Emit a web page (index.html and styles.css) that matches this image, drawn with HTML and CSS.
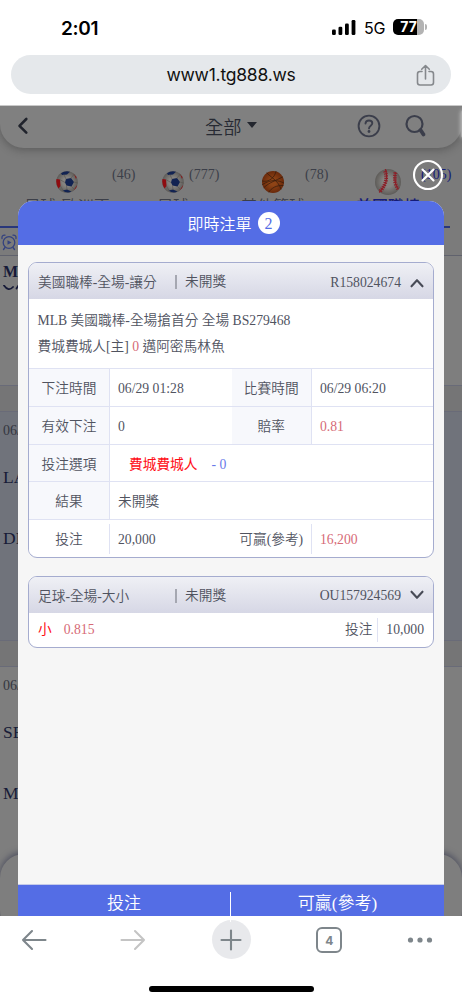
FILE: index.html
```html
<!DOCTYPE html>
<html lang="zh-Hant">
<head>
<meta charset="utf-8">
<meta name="viewport" content="width=device-width, initial-scale=1">
<title>即時注單</title>
<link rel="stylesheet" href="styles.css">
</head>
<body>
<div class="phone">
  <div class="status">
    <span class="clock">2:01</span>
    <span class="status-right">
      <svg class="signal" width="24" height="15" viewBox="0 0 24 15"><rect x="0" y="9.5" width="3.8" height="5.5" rx="1.3"/><rect x="6.5" y="6.7" width="3.8" height="8.3" rx="1.3"/><rect x="13" y="3.6" width="3.8" height="11.4" rx="1.3"/><rect x="19.6" y="0" width="3.8" height="15" rx="1.3"/></svg>
      <span class="net">5G</span>
      <span class="battery">77</span><i class="battery-tip"></i>
    </span>
  </div>
  <div class="address">
    <div class="address-pill">
      <span>www1.tg888.ws</span>
      <svg class="share" width="20" height="24" viewBox="0 0 20 24"><path d="M6 7.5H4Q1.5 7.5 1.5 10V18.5Q1.5 21 4 21H15Q17.500 21 17.500 18.500V10Q17.500 7.500 15 7.500H13M9.500 15V1.800M5.700 5.300L9.500 1.500L13.300 5.300"/></svg>
    </div>
  </div>

  <div class="web">
    <div class="page">
      <header class="topbar">
        <svg class="back" width="12" height="18" viewBox="0 0 12 18"><path d="M9.300 2L2.500 8.800L9.300 15.600"/></svg>
        <div class="topbar-title">全部<i class="caret"></i></div>
        <svg class="help" width="24" height="24" viewBox="0 0 24 24"><circle cx="12" cy="12" r="10.400"/><path d="M8.500 9.500Q8.700 6.500 12 6.500Q15.300 6.500 15.300 9.300C15.300 11.700 12 11.700 12 14.400"/><circle class="fill" cx="12" cy="17.500" r="1.400"/></svg>
        <svg class="search" width="22" height="24" viewBox="0 0 22 24"><circle cx="9.500" cy="10" r="8"/><path class="handle" d="M15.500 16L18.500 20.500"/></svg>
      </header>
      <nav class="tabs">
        <div class="tab">
          <svg width="22" height="22" viewBox="0 0 22 22"><use href="#soccer"/></svg>
          <span class="count c1">(46)</span><b>足球-歐洲盃</b>
        </div>
        <div class="tab">
          <svg width="22" height="22" viewBox="0 0 22 22"><use href="#soccer"/></svg>
          <span class="count c2">(777)</span><b>足球</b>
        </div>
        <div class="tab">
          <svg width="22" height="22" viewBox="0 0 22 22">
            <defs><radialGradient id="orange"><stop offset=".3" stop-color="#8f4416"/><stop offset="1" stop-color="#69290b"/></radialGradient></defs>
            <circle cx="11" cy="11" r="11" fill="url(#orange)"/><path d="M0 10C7 12 13 6 14 0.500M0.500 13.500C9 8 16 9 21.800 12M2 16.500C8 11 13 10 20.500 6M5 2C8 6 16 9 19 18M7 21C9 17 15 14 21 14.500" fill="none" stroke="#3a1d0d" stroke-width=".8"/>
          </svg>
          <span class="count c3">(78)</span><b>其他籃球</b>
        </div>
        <div class="tab active">
          <svg class="ball-lg" width="26" height="26" viewBox="0 0 26 26"><circle cx="13" cy="13" r="13" fill="url(#white)"/><g fill="none" stroke="#8c2029"><path d="M10.500 .500Q14.500 13 4.500 23M20.500 3.500Q18.500 13 23 20" stroke-width="1.200"/><path d="M10 2Q14 13 4.500 23M20.500 3.500Q18.500 13 23 20" stroke-width="3.800" stroke-linecap="butt" stroke-dasharray="1.200 1.100"/></g></svg>
          <span class="count c4">(105)</span><b>美國職棒</b>
        </div>
      </nav>
      <svg class="symbols" width="0" height="0"><defs>
        <radialGradient id="white"><stop offset=".4" stop-color="#858380"/><stop offset="1" stop-color="#5e5c59"/></radialGradient>
        <g id="soccer"><circle cx="11" cy="11" r="10.800" fill="url(#white)"/><path d="M10 8L15 7L18 11L15.500 15.500L10.500 14.500L9 11.500Z" fill="#122352"/><path d="M5 2.200Q9 -.500 14 .700L11 3.500L6 4Z" fill="#122352"/><path d="M6.500 19.500L11 18.500L15.500 20.500Q11 22.800 6.500 19.500Z" fill="#122352"/><path d="M.500 8L4 8.500L4.500 15L2.500 17.500Q-.500 13 .500 8Z" fill="#8f0c10"/><path d="M17 2.500L20.500 6L20 8Q19.500 5 17 2.500ZM20.500 15L21.300 14Q20.500 18 17.500 19.500Z" fill="#8f0c10"/><path d="M4.500 9L9 11.500M4.500 15L7 19.500M10.500 14.500L11 18.500M10 8L8 3.800M15 7L18 3.500M18 11L21.500 12M15.500 15.500L18 18" fill="none" stroke="#56534f" stroke-width=".6"/></g>
      </defs></svg>
      <div class="games">
        <div class="toolbar-row"><svg width="16" height="17" viewBox="0 0 16 17"><circle cx="8" cy="8.500" r="5.800"/><path d="M1 4.500Q.500 1 4 1.200M15 4.500Q15.500 1 12 1.200M4 13.500L2.500 15.500M12 13.500L13.500 15.500"/><path class="fill" d="M6.500 6.200V10.800L10.500 8.500Z"/></svg></div>
        <div class="league">MLB<svg width="16" height="6" viewBox="0 0 16 6"><path d="M1 .500Q5.500 7 10 2M13.500 3.500L15.500 .500"/></svg></div>
        <div class="band"></div>
        <div class="game tint"><time>06/29</time><p>LAD</p><p>DET</p></div>
        <div class="band"></div>
        <div class="game"><time>06/29</time><p>SEA</p><p>MIN</p></div>
      </div>
      <div class="bottom-nav"></div>
      <div class="side-glow"></div>
    </div>

    <section class="modal">
      <svg class="close" width="32" height="32" viewBox="0 0 32 32"><circle cx="16" cy="16" r="14"/><path d="M10.500 10.500L21.500 21.500M21.500 10.500L10.500 21.500"/></svg>
      <h1>即時注單<span class="badge">2</span></h1>
      <div class="modal-body">
        <article class="card">
          <div class="card-head">
            <span class="kind">美國職棒-全場-讓分</span><span class="state">未開獎</span>
            <span class="ref">R158024674</span>
            <svg width="14" height="10" viewBox="0 0 14 10"><path d="M1.500 8.300L7 2.200L12.500 8.300"/></svg>
          </div>
          <div class="desc"><p>MLB 美國職棒-全場搶首分 全場 BS279468</p><p>費城費城人[主] <em>0</em> 邁阿密馬林魚</p></div>
          <div class="row"><div class="label">下注時間</div><div class="val">06/29 01:28</div><div class="label">比賽時間</div><div class="val">06/29 06:20</div></div>
          <div class="row"><div class="label">有效下注</div><div class="val">0</div><div class="label">賠率</div><div class="val"><em>0.81</em></div></div>
          <div class="row wide"><div class="label">投注選項</div><div class="val pick"><strong>費城費城人</strong><span>- 0</span></div></div>
          <div class="row wide"><div class="label">結果</div><div class="val">未開獎</div></div>
          <div class="row total"><div class="label">投注</div><div class="val">20,000</div><div class="label">可贏(參考)</div><div class="val"><em>16,200</em></div></div>
        </article>
        <article class="card">
          <div class="card-head">
            <span class="kind">足球-全場-大小</span><span class="state">未開獎</span>
            <span class="ref">OU157924569</span>
            <svg width="14" height="10" viewBox="0 0 14 10"><path d="M1.500 1.700L7 7.800L12.500 1.700"/></svg>
          </div>
          <div class="summary"><strong>小</strong><em>0.815</em><span class="stake">投注</span><span class="amount">10,000</span></div>
        </article>
      </div>
      <footer><span>投注</span><span>可贏(參考)</span></footer>
    </section>
  </div>

  <div class="browser-bar">
    <div class="buttons">
      <svg width="26" height="22" viewBox="0 0 26 22"><path d="M24.500 11H2M11 2L2 11L11 20"/></svg>
      <svg class="off" width="26" height="22" viewBox="0 0 26 22"><path d="M1.500 11H24M15 2L24 11L15 20"/></svg>
      <span class="plus"><svg width="22" height="22" viewBox="0 0 22 22"><path d="M11 1.500V20.500M1.500 11H20.500"/></svg></span>
      <span class="tabs-count">4</span>
      <svg class="dots" width="26" height="8" viewBox="0 0 26 8"><circle cx="3.500" cy="4" r="2.600"/><circle cx="13" cy="4" r="2.600"/><circle cx="22.500" cy="4" r="2.600"/></svg>
    </div>
    <div class="home"></div>
  </div>
</div>
</body>
</html>
```

FILE: styles.css
```css
* { box-sizing: border-box; }
body { margin: 0; background: #fff; font-family: "Liberation Serif", "Noto Sans CJK TC", serif; font-weight: 350; color: #50535f; }
p, h1 { margin: 0; font-weight: 350; }
em { font-style: normal; color: #d66a76; }
svg { display: block; flex: none; fill: none; stroke-linecap: round; stroke-linejoin: round; }
svg .fill { stroke: none; }
.phone { width: 462px; height: 1000px; display: flex; flex-direction: column; overflow: hidden; }

.status { height: 55px; padding: 0 35px 0 61px; display: flex; align-items: center; justify-content: space-between; font-family: Inter, sans-serif; font-weight: 400; color: #000; }
.clock { font-size: 19px; font-weight: 600; letter-spacing: -0.3px; padding-top: 1px; }
.status-right { display: flex; align-items: center; margin-top: -1px; }
.signal { fill: #000; }
.net { font-size: 16px; margin: 2px 8px 0 8px; letter-spacing: -0.2px; width: 21px; }
.battery { width: 31px; height: 16px; border-radius: 5px; background: linear-gradient(90deg, #000 77%, #b3b3b3 77%); color: #fff; font-size: 14px; line-height: 16px; font-weight: 700; text-align: center; }
.battery-tip { width: 2px; height: 6px; background: #b3b3b3; border-radius: 0 2px 2px 0; margin-left: 1px; }
.address { height: 50px; padding: 0 11px; }
.address-pill { height: 39px; border-radius: 20px; background: #e5e8eb; display: grid; grid-template-columns: 1fr auto 1fr; align-items: center; padding: 0 15px; font: 17.5px Inter, sans-serif; color: #111; letter-spacing: -0.22px; }
.address-pill span { grid-column: 2; margin-top: -1px; }
.share { justify-self: end; stroke: #85888c; stroke-width: 1.6; margin-top: 3px; }

.web { position: relative; height: 811px; border-top: 1px solid #c9c9c9; }
.page { height: 810px; background: #7b7b7b; overflow: hidden; position: relative; }
.topbar { height: 42px; padding: 0 35px 2px 17px; background: #808080; border-radius: 0 0 24px 24px; box-shadow: 0 2px 8px rgba(40,40,40,.38); display: grid; grid-template-columns: 12px 1fr 24px 22px; align-items: center; stroke: #3b3e4b; }
.back { stroke: #20232c; stroke-width: 2.6; }
.topbar-title { font-size: 18.3px; color: #272a33; display: flex; align-items: center; padding-left: 176px; }
.caret { border: 5.5px solid transparent; border-top: 6px solid #23262e; border-bottom: 0; margin-left: 5px; margin-top: -2px; }
.help { stroke: #3b3e4b; stroke-width: 1.9; margin-left: -24px; }
.search { stroke: #3b3e4b; stroke-width: 2.2; }
.help .fill { fill: #3b3e4b; }
.handle { stroke-width: 3.8; }
.tabs { height: 80px; width: 450px; display: grid; grid-template-columns: 134px 78px 122px 108px; border-bottom: 2px solid #29377b; padding-top: 23px; }
.tab { position: relative; display: flex; flex-direction: column; align-items: center; color: #3c3f49; }
.tab b { font-size: 16px; font-weight: 350; line-height: 20px; margin-top: 4px; }
.tab .ball-lg { margin: -2px 0; }
.tab.active { color: #151b78; }
.tab.active b { font-weight: 500; }
.count { position: absolute; top: -4px; font-size: 14px; line-height: 16px; }
.c1 { left: 112px; }
.c2 { left: 55px; }
.c3 { left: 93px; }
.c4 { left: 87px; }
.symbols { position: absolute; }
.toolbar-row { height: 28px; padding: 6px 1px; border-bottom: 1px solid #60626d; }
.toolbar-row svg { stroke: #34427f; stroke-width: 1.3; }
.toolbar-row .fill { fill: #34427f; }
.league { height: 129px; padding: 7px 3px 0; color: #161a38; font-weight: 700; font-size: 16px; line-height: 18px; background: #7e7e7e; }
.league svg { stroke: #161a38; stroke-width: 1.8; margin-top: 4px; }
.band { height: 27px; border: solid #696b78; border-width: 1px 0; background: #757576; }
.game { height: 228px; padding: 10px 3px 0; background: #7e7e7e; }
.game.tint { background: #70737b; }
.game time { font-size: 14px; line-height: 18px; color: #343640; display: block; margin-bottom: 27px; }
.game p { font-size: 17.500px; line-height: 20px; color: #171b37; margin-bottom: 41px; }
.bottom-nav { position: absolute; left: 0; right: 0; top: 748px; height: 80px; border-radius: 24px; background: #7e7e7e; box-shadow: 0 -2px 6px rgba(45,48,75,.6); }
.side-glow { position: absolute; right: -5px; top: 4px; width: 6px; height: 28px; border-radius: 5px; background: #aaa; box-shadow: 0 0 4px #ccc; }

.modal { position: absolute; left: 18px; top: 95px; width: 426px; height: 715px; display: flex; flex-direction: column; border-radius: 15px 15px 0 0; background: #f6f6f6; }
.close { position: absolute; right: 0; top: -42px; stroke: #fff; stroke-width: 2.1; }
.modal h1 { height: 44px; border-radius: 15px 15px 0 0; background: #546de5; color: #fff; font-size: 16px; display: flex; align-items: center; justify-content: center; gap: 6px; padding-left: 5px; }
.badge { width: 22px; height: 22px; border-radius: 50%; background: #fff; color: #546de5; text-align: center; line-height: 23px; }
.modal-body { flex: 1; padding: 17px 10px 0; display: flex; flex-direction: column; gap: 18px; }
.card { border: 1px solid #a5accf; border-radius: 9px; background: #fff; overflow: hidden; font-size: 13.700px; line-height: 20px; }
.card:first-child { height: 296px; }
.card:last-child { height: 72px; }
.card-head { height: 36px; background: linear-gradient(#eff0f5, #d6d7e5); display: grid; grid-template-columns: 138px 1fr auto 14px; align-items: center; padding: 0 9px; }
.card-head svg { stroke: #484b57; stroke-width: 2.1; margin: 3px 0 0; }
.card:last-child .card-head svg { margin-top: 0; }
.kind { padding-top: 4px; }
.state { border-left: 2px solid #a5a7b1; padding-left: 8px; line-height: 14px; margin: 2px 0 0 -1px; }
.ref { margin: 3px 9px 0 0; }
.card:last-child .ref { margin-top: 2px; }
.desc { height: 69px; padding: 9px 9px 0 8.5px; line-height: 26px; }
.row { height: 37.800px; display: grid; grid-template-columns: 81px 121.500px 80.500px 1fr; grid-template-rows: 100%; border-top: 1px solid #dfe2f3; line-height: 35px; }
.row.wide { grid-template-columns: 81px 1fr; }
.label { background: #f7f8fc; border-right: 1px solid #dfe2f3; text-align: center; padding-top: 2px; }
.label:nth-child(3) { white-space: nowrap; }
.val { padding: 2px 0 0 8px; }
.pick { padding-left: 19px; display: flex; gap: 14px; }
.pick strong, .summary strong { color: #ff0d16; font-weight: 400; }
.pick span { color: #6979e9; }
.total .label { background: #fff; line-height: 30px; margin: 4px 0 3px; padding-top: 1px; }
.summary { height: 34px; display: flex; align-items: center; padding: 0 9px; }
.summary em { margin-left: 12px; }
.stake { margin-left: auto; padding-right: 5px; border-right: 1px solid #dfe2f3; line-height: 24px; }
.amount { padding-left: 8px; }
.modal footer { height: 32px; background: #546de5; border-top: 1px solid #c5cbe9; color: #fff; font-size: 17px; display: grid; grid-template-columns: 212px 1fr; text-align: center; line-height: 37px; }
.modal footer span + span { border-left: 1px solid #fff; margin-top: 7px; line-height: 23px; }

.browser-bar { height: 84px; display: flex; flex-direction: column; align-items: center; background: #fff; }
.buttons { height: 47px; width: 462px; padding: 0 29px 0 21px; display: grid; grid-template-columns: 98px 91px 103px 91px 26px; justify-content: space-between; align-items: center; stroke: #7e868b; stroke-width: 2.1; }
.buttons .off { stroke: #c4c4c4; }
.plus { width: 39px; height: 39px; border-radius: 50%; background: #e8e9ec; display: grid; place-items: center; }
.tabs-count { width: 26px; height: 26px; border: 2px solid #7e868b; border-radius: 6px; color: #7e868b; text-align: center; font: 700 12px/23px Inter, sans-serif; margin-left: 1px; }
.dots { fill: #7e868b; stroke: none; }
.home { width: 165px; height: 6px; border-radius: 3px; background: #000; margin-top: 23px; }
```
